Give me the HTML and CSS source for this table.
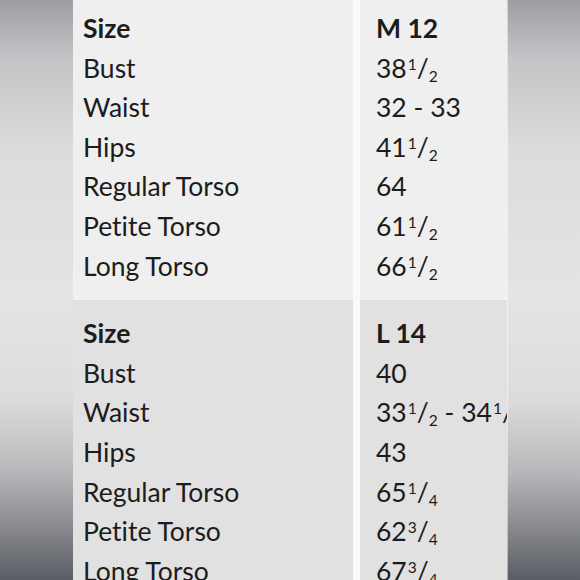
FILE: index.html
```html
<!DOCTYPE html>
<html>
<head>
<meta charset="utf-8">
<link rel="stylesheet" href="styles.css">
</head>
<body>
<div class="chart">
  <div class="section light">
    <div class="col labels">
      <div class="row head">Size</div>
      <div class="row">Bust</div>
      <div class="row">Waist</div>
      <div class="row">Hips</div>
      <div class="row">Regular Torso</div>
      <div class="row">Petite Torso</div>
      <div class="row">Long Torso</div>
    </div>
    <div class="col values">
      <div class="row head">M 12</div>
      <div class="row">38<span class="num">1</span>/<span class="den">2</span></div>
      <div class="row">32 - 33</div>
      <div class="row">41<span class="num">1</span>/<span class="den">2</span></div>
      <div class="row">64</div>
      <div class="row">61<span class="num">1</span>/<span class="den">2</span></div>
      <div class="row">66<span class="num">1</span>/<span class="den">2</span></div>
    </div>
  </div>
  <div class="section dark">
    <div class="col labels">
      <div class="row head">Size</div>
      <div class="row">Bust</div>
      <div class="row">Waist</div>
      <div class="row">Hips</div>
      <div class="row">Regular Torso</div>
      <div class="row">Petite Torso</div>
      <div class="row">Long Torso</div>
    </div>
    <div class="col values">
      <div class="row head">L 14</div>
      <div class="row">40</div>
      <div class="row">33<span class="num">1</span>/<span class="den">2</span> - 34<span class="num">1</span>/<span class="den">2</span></div>
      <div class="row">43</div>
      <div class="row">65<span class="num">1</span>/<span class="den">4</span></div>
      <div class="row">62<span class="num">3</span>/<span class="den">4</span></div>
      <div class="row">67<span class="num">3</span>/<span class="den">4</span></div>
    </div>
  </div>
</div>
</body>
</html>
```
FILE: styles.css
```css
html, body {
  margin: 0;
  padding: 0;
  height: 580px;
  overflow: hidden;
}
body {
  background: linear-gradient(to bottom,
    #9c9ea2 0px,
    #c4c5c7 60px,
    #dcdcdd 150px,
    #e4e4e4 300px,
    #dcdcdc 400px,
    #b8b9bb 470px,
    #85878c 530px,
    #5a5d64 580px);
  font-family: Lato, "Open Sans", sans-serif;
  color: #1c1c1c;
  font-variant-ligatures: none;
}
.chart {
  margin-left: 73px;
  margin-top: -5px;
  width: 434px;
  background: #fafafa;
  box-shadow: 1px 0 0 rgba(255,255,255,0.5);
}
.section {
  display: grid;
  grid-template-columns: 280px 147px;
  column-gap: 7px;
}
.col {
  padding: 14px 0;
  overflow: hidden;
  white-space: nowrap;
}
.light .col { background: #efefef; }
.dark .col { background: #e1e1e1; }
.light .col { padding-bottom: 13px; }
.light { border-bottom: 1px solid #f4f4f4; }
.labels { padding-left: 10px; }
.values { padding-left: 16px; }
.row {
  height: 39.6px;
  line-height: 39.6px;
  font-size: 26.5px;
}
.head { font-weight: 700; }
.num, .den {
  font-size: 15.5px;
  line-height: 0;
  position: relative;
}
.num { top: -8px; margin-left: 1px; }
.den { top: 4px; }
```
